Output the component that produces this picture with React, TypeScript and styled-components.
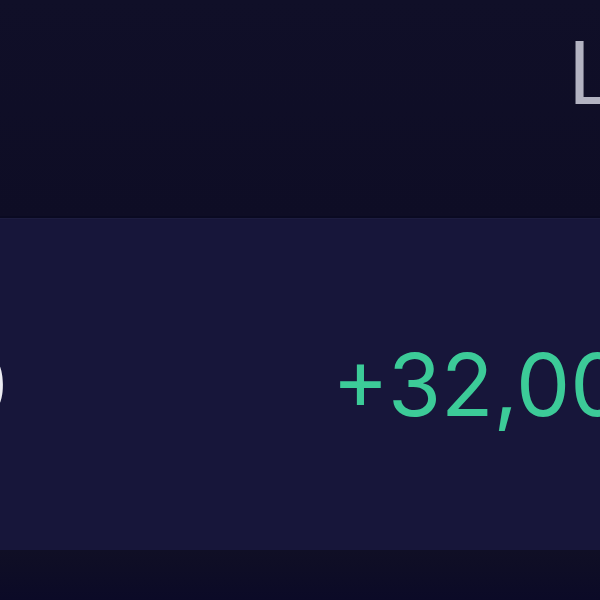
import React from "react";
import styled, { createGlobalStyle } from "styled-components";

const Global = createGlobalStyle`
  html, body { margin: 0; padding: 0; background: #0f0e26; }
  #root { width: 600px; height: 600px; }
`;

const Screen = styled.div`
  width: 600px;
  height: 600px;
  overflow: hidden;
  display: flex;
  flex-direction: column;
  background: #0f0e26;
  font-family: Inter, "Liberation Sans", Arial, sans-serif;
`;

const Header = styled.div`
  height: 218px;
  display: flex;
  align-items: flex-start;
  padding-left: 568px;
  box-sizing: border-box;
  background: linear-gradient(#100f28, #0e0d25);
  border-bottom: 2px solid #0a0a22;
`;

const HeaderText = styled.span`
  font-size: 86px;
  line-height: 1;
  margin-top: 30px;
  color: #b3b3c2;
  white-space: nowrap;
  font-weight: 400;
`;

const Band = styled.div`
  height: 331px;
  flex-shrink: 0;
  display: flex;
  align-items: center;
  background: #17163a;
  border-top: 1px solid #1d1d40;
`;

const Label = styled.span`
  width: 300px;
  margin-left: -292px;
  text-align: right;
  font-size: 86px;
  color: #ececf2;
  white-space: nowrap;
  flex-shrink: 0;
`;

const Amount = styled.span`
  margin-left: 324px;
  font-size: 86px;
  color: #3ccb98;
  white-space: nowrap;
`;

const Footer = styled.div`
  flex: 1;
  background: linear-gradient(#100f25, #0b0a27);
`;

export default function App() {
  return (
    <>
      <Global />
      <Screen>
        <Header>
          <HeaderText>Limit</HeaderText>
        </Header>
        <Band>
          <Label>$0</Label>
          <Amount>+32,000</Amount>
        </Band>
        <Footer />
      </Screen>
    </>
  );
}
